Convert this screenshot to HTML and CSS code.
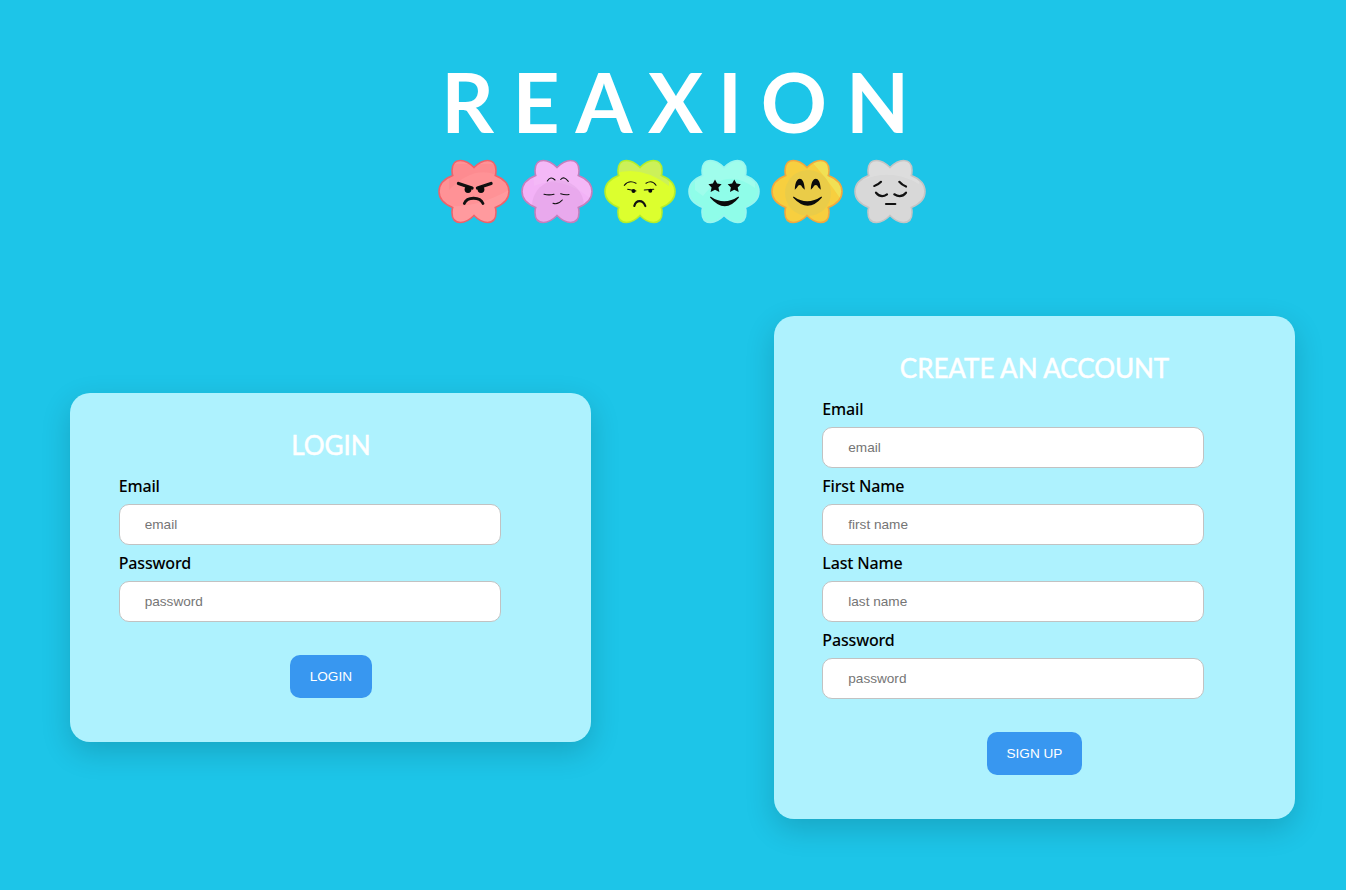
FILE: index.html
```html
<!DOCTYPE html>
<html lang="en">
<head>
<meta charset="utf-8">
<title>Reaxion</title>
<link rel="stylesheet" href="styles.css">
</head>
<body>
<header class="brand">
  <h1 class="logo"><span class="l-r">R</span><span class="l-e">E</span><span class="l-a">A</span><span class="l-x">X</span><span class="l-i">I</span><span class="l-o">O</span><span class="l-n">N</span></h1>
  <div class="flowers">
    <svg class="flower angry" viewBox="-1 -1 72 65">
      <defs>
        <path id="petal" d="M35 7.5C39 3.5 44 .5 48.5 .5C54.5 .5 57 5 57 10.5C57 12.5 56.7 14.5 56.3 15.5C64 18.5 70 24 70 31.5C70 39 64 44.5 56.3 47.5C56.7 48.5 57 50.5 57 52.5C57 58 54.5 62.5 48.5 62.5C44 62.5 39 59.5 35 55.5C31 59.5 26 62.5 21.5 62.5C15.5 62.5 13 58 13 52.5C13 50.5 13.3 48.5 13.7 47.5C6 44.5 0 39 0 31.5C0 24 6 18.5 13.7 15.5C13.3 14.5 13 12.5 13 10.5C13 5 15.5 .5 21.5 .5C26 .5 31 3.5 35 7.5Z"/>
        <clipPath id="petal-clip"><use href="#petal"/></clipPath>
      </defs>
      <use class="body" href="#petal"/>
      <g clip-path="url(#petal-clip)">
        <path class="shade" d="M10 4H60V16Q35 4 10 30Z"/>
        <path class="gloss" d="M0 44Q30 52 70 30V64H0Z"/>
      </g>
      <use class="rim" href="#petal"/>
      <path class="line thick" d="M19.5 23.5L33 28M52 23.5L38.5 28"/>
      <circle class="ink" cx="29" cy="29.5" r="3.4"/><circle class="ink" cx="42" cy="29.5" r="3.4"/>
      <path class="line bold" d="M25.3 43.5C28 36.5 41 36.5 44 43.5"/>
    </svg>
    <svg class="flower dreamy" viewBox="-1 -1 72 65">
      <use class="body" href="#petal"/>
      <g clip-path="url(#petal-clip)">
        <circle class="shade" cx="36" cy="46" r="26"/>
        <path class="gloss" d="M12 26Q40 14 70 40V20L50 -2H10Z"/>
      </g>
      <use class="rim" href="#petal"/>
      <path class="line thin" d="M25.3 21Q28.7 15.5 33 20M38.7 19.5Q42 15.5 46.3 21.3M22 34.2Q27 35.6 32 34.2M38.7 33.7Q43 35.4 47 34.5M31 43.3Q35.6 45.2 40.3 40"/>
    </svg>
    <svg class="flower unsure" viewBox="-1 -1 72 65">
      <use class="body" href="#petal"/>
      <g clip-path="url(#petal-clip)">
        <path class="gloss" d="M8 -2H64V26Q36 4 8 14Z"/>
      </g>
      <use class="rim" href="#petal"/>
      <path class="line thin" d="M19.3 25.3Q24 19.5 31 23.3M41 23.3Q47 19.5 51 25.3M22.7 29.3L31 31M39.3 30L48.7 29.3"/>
      <circle class="ink" cx="28.5" cy="31" r="2"/><circle class="ink" cx="45.3" cy="30.8" r="2"/>
      <path class="line med" d="M29.3 46C31 39.5 38 39.5 40.3 46"/>
    </svg>
    <svg class="flower starry" viewBox="-1 -1 72 65">
      <use class="body" href="#petal"/>
      <g clip-path="url(#petal-clip)">
        <path class="gloss" d="M6 -2H66V28Q36 6 14 36L6 30Z"/>
      </g>
      <use class="rim" href="#petal"/>
      <path class="ink" d="M26 19.5L28.2 23.6L32.6 24.2L29.4 27.4L30.4 32L26 29.8L21.6 32L22.6 27.4L19.4 24.2L23.8 23.6ZM45.3 19.5L47.5 23.6L51.9 24.2L48.7 27.4L49.7 32L45.3 29.8L40.9 32L41.9 27.4L38.7 24.2L43.1 23.6Z"/>
      <path class="ink" d="M21.5 36.5Q35 46 49.5 36.5L50 37.5Q36 55 21 37.5Z"/>
    </svg>
    <svg class="flower happy" viewBox="-1 -1 72 65">
      <use class="body" href="#petal"/>
      <g clip-path="url(#petal-clip)">
        <path class="gloss" d="M36 -2H72V44Q52 14 36 -2Z"/>
        <circle class="shade" cx="36" cy="33" r="23"/>
      </g>
      <use class="rim" href="#petal"/>
      <path class="ink" d="M22.8 29.8C23 22 25.5 18.8 27.8 18.8C30.2 18.8 32.4 22 32.8 29.8L30.4 27.6C29.6 25.8 28.8 25 27.8 25C26.8 25 25.8 25.8 25 27.6ZM38.8 29.8C39 22 41.5 18.8 43.8 18.8C46.2 18.8 48.4 22 48.8 29.8L46.4 27.6C45.6 25.8 44.8 25 43.8 25C42.8 25 41.8 25.8 41 27.6Z"/>
      <path class="ink" d="M21.5 36.5Q35 46 49.5 36.5L50 37.5Q36 54 21 37.5Z"/>
    </svg>
    <svg class="flower sad" viewBox="-1 -1 72 65">
      <use class="body" href="#petal"/>
      <g clip-path="url(#petal-clip)">
        <path class="gloss" d="M8 -2H64V24Q36 8 8 20Z"/>
      </g>
      <use class="rim" href="#petal"/>
      <path class="line med" d="M19.3 26Q23 25 26 21.8M44.3 21.8Q47 25 51 26.5M21 32.7Q26 38.6 32 34.3M39.3 34.3Q46 38.6 51 32.7"/>
      <path class="line med" d="M31 44H40.3"/>
    </svg>
  </div>
</header>

<main class="forms">
  <form class="card">
    <h2 class="card-title">LOGIN</h2>
    <div class="field">
      <label class="field-label" for="login-email">Email</label>
      <input class="field-input" id="login-email" type="text" placeholder="email">
    </div>
    <div class="field">
      <label class="field-label" for="login-password">Password</label>
      <input class="field-input" id="login-password" type="text" placeholder="password">
    </div>
    <button class="submit" type="button">LOGIN</button>
  </form>

  <form class="card">
    <h2 class="card-title">CREATE AN ACCOUNT</h2>
    <div class="field">
      <label class="field-label" for="signup-email">Email</label>
      <input class="field-input" id="signup-email" type="text" placeholder="email">
    </div>
    <div class="field">
      <label class="field-label" for="signup-first">First Name</label>
      <input class="field-input" id="signup-first" type="text" placeholder="first name">
    </div>
    <div class="field">
      <label class="field-label" for="signup-last">Last Name</label>
      <input class="field-input" id="signup-last" type="text" placeholder="last name">
    </div>
    <div class="field">
      <label class="field-label" for="signup-password">Password</label>
      <input class="field-input" id="signup-password" type="text" placeholder="password">
    </div>
    <button class="submit" type="button">SIGN UP</button>
  </form>
</main>
</body>
</html>
```

FILE: styles.css
```css
* { box-sizing: border-box; }

html, body { height: 100%; }

body {
  margin: 0;
  background: #1dc5e8;
  font-family: "Liberation Sans", Arial, sans-serif;
  overflow: hidden;
}

.brand {
  display: flex;
  flex-direction: column;
  align-items: flex-start;
  padding: 59px 0 0 437px;
}

.logo {
  margin: 0;
  display: flex;
  height: 84px;
  color: #fff;
  font: 700 82px/84px Lato, sans-serif;
}

.logo span { display: block; text-align: center; }
.l-r { width: 61px; }
.l-e { width: 76px; }
.l-a { width: 60px; }
.l-x { width: 83px; }
.l-i { width: 26px; }
.l-o { width: 102px; }
.l-n { width: 65px; }

.flowers {
  display: flex;
  gap: 11.2px;
  margin: 16px 0 0 1px;
}

.flower { width: 72px; height: 65px; display: block; }

.rim { fill: none; stroke-width: 1.6; }
.line { fill: none; stroke: #111; stroke-linecap: round; }
.thick { stroke-width: 3.4; }
.bold { stroke-width: 2.8; }
.med { stroke-width: 2.2; }
.thin { stroke-width: 1.1; }
.ink { fill: #0b0b0b; }

.angry .body { fill: #ff9296; }
.angry .rim { stroke: #ef626a; }
.angry .shade { fill: #f98388; opacity: .4; }
.angry .gloss { fill: #fff; opacity: .08; }

.dreamy .body { fill: #f3b2f7; }
.dreamy .rim { stroke: #c47fbd; }
.dreamy .shade { fill: #dd9de0; opacity: .45; }
.dreamy .gloss { fill: #fff; opacity: .08; }

.unsure .body { fill: #dcff2e; }
.unsure .rim { stroke: #b5ee2b; }
.unsure .gloss { fill: #bfe67e; opacity: .55; }

.starry .body { fill: #8ffde9; }
.starry .rim { stroke: #99f6ee; }
.starry .gloss { fill: #fff; opacity: .15; }

.happy .body { fill: #f7cf3f; }
.happy .rim { stroke: #f2a83f; }
.happy .shade { fill: #e5cb4c; opacity: .75; }
.happy .gloss { fill: #eee75e; opacity: .7; }

.sad .body { fill: #d8d8d8; }
.sad .rim { stroke: #c5c5c5; }
.sad .gloss { fill: #fff; opacity: .15; }

.forms {
  display: flex;
  align-items: center;
  gap: 182.6px;
  margin-top: 92px;
  padding-left: 70.4px;
}

.card {
  width: 521px;
  flex: none;
  display: flex;
  flex-direction: column;
  padding: 30px 48.3px 44px;
  background: #aef2fe;
  border-radius: 20px;
  box-shadow: 0 10px 30px rgba(0, 0, 0, .16);
}

.card-title {
  margin: 0;
  height: 45px;
  color: #fff;
  font: 400 26px/45px Lato, sans-serif;
  letter-spacing: -.05px;
  -webkit-text-stroke: .5px #fff;
  text-align: center;
}

.field { display: flex; flex-direction: column; width: 382px; }

.field-label {
  height: 36px;
  color: #000;
  font: 500 16px/36px "Noto Sans", sans-serif;
  letter-spacing: -.15px;
}

.field-input {
  height: 41px;
  padding: 0 25px;
  border: 1px solid #c2c2c2;
  border-radius: 10px;
  background: #fff;
  font: 13.6px "Liberation Sans", Arial, sans-serif;
  outline: none;
}

.field-input::placeholder { color: #757575; opacity: 1; }

.submit {
  align-self: center;
  height: 43px;
  margin-top: 33px;
  padding: 0 20px;
  border: 0;
  border-radius: 10px;
  background: #3897f0;
  color: #fff;
  font: 13.6px "Liberation Sans", Arial, sans-serif;
}
```
